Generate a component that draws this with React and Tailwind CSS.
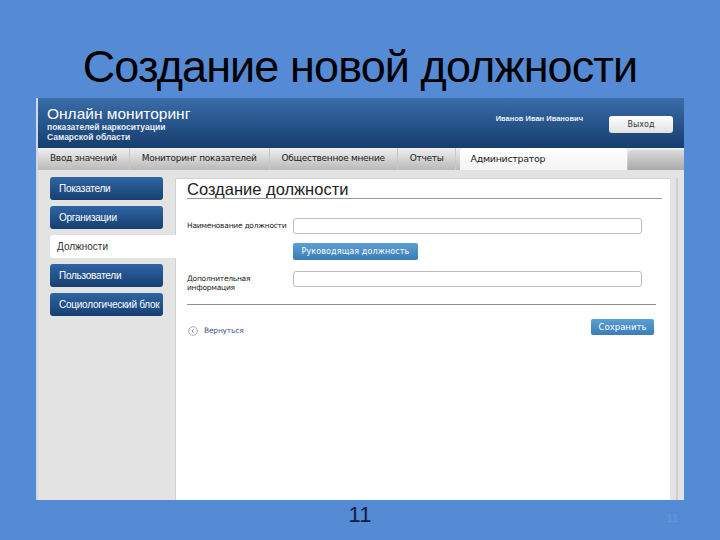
const sideItems = ['Показатели', 'Организации', 'Должности', 'Пользователи', 'Социологический блок']

const navItems = ['Ввод значений', 'Мониторинг показателей', 'Общественное мнение', 'Отчеты']

const App = () => {
    return (
        <div className="w-[720px] h-[540px] bg-[#558ad5] flex flex-col items-center overflow-hidden font-['Liberation_Sans',sans-serif]">
            <h1 className="mt-[38px] h-[60px] text-[45px] leading-[58px] text-black tracking-[-0.9px]">Создание новой должности</h1>

            <div className="w-[648px] h-[402px] flex flex-col border-l-2 border-[#cfd8e4] bg-[#e3e3e3]">
                {/* header */}
                <div className="h-[50px] bg-gradient-to-b from-[#3a6da9] to-[#163e6e] flex justify-between">
                    <div className="pl-[9px] pt-[6px] text-white">
                        <p className="text-[15.5px] leading-[19px]">Онлайн мониторинг</p>
                        <p className="text-[8.5px] leading-[9.5px] font-bold text-[#e6edf6]">показателей наркоситуации</p>
                        <p className="text-[8.5px] leading-[9.5px] font-bold text-[#e6edf6]">Самарской области</p>
                    </div>
                    <div className="flex items-start pt-[18px] pr-[11px]">
                        <p className="text-[7.5px] font-bold text-[#e8eef6] -mt-[3px] mr-[26px]">Иванов Иван Иванович</p>
                        <button className="w-[64px] h-[17px] rounded-[3px] bg-gradient-to-b from-white to-[#e2e2e2] text-[8px] text-[#333] font-['DejaVu_Sans',sans-serif]">Выход</button>
                    </div>
                </div>

                {/* nav */}
                <div className="h-[22px] bg-gradient-to-b from-[#f0f0f0] to-[#b9b9b9] flex items-stretch text-[9px] text-[#222] font-['DejaVu_Sans',sans-serif] tracking-[-0.3px]">
                    {navItems.map((item) => (
                        <div key={item} className="flex items-center px-[12px] border-r border-[#c9c9c9]">
                            {item}
                        </div>
                    ))}
                    <div className="w-[167px] ml-[4px] bg-gradient-to-b from-white to-[#f4f4f4] rounded-t-[4px] flex items-center pl-[10px] text-[9.5px]">Администратор</div>
                    <div className="flex-1 mt-[2px] ml-[1px] rounded-tl-[5px] bg-gradient-to-b from-[#dcdcdc] to-[#a9a9a9]"></div>
                </div>

                {/* body */}
                <div className="flex-1 flex">
                    <div className="w-[137px] pt-[7px] pl-[12px] flex flex-col gap-[6px]">
                        {sideItems.map((item) =>
                            item === 'Должности' ? (
                                <div key={item} className="h-[23px] -mr-[6px] bg-white rounded-l-[3px] flex items-center pl-[7px] text-[10px] text-[#333] relative z-10">
                                    {item}
                                </div>
                            ) : (
                                <div key={item} className="w-[113px] h-[23px] rounded-[3px] bg-gradient-to-b from-[#2f66a4] to-[#173f71] flex items-center pl-[9px] text-[10px] tracking-[-0.25px] text-white whitespace-nowrap overflow-hidden">
                                    {item}
                                </div>
                            )
                        )}
                    </div>

                    <div className="w-[495px] mt-[8px] bg-white border-l border-t border-[#d2d2d2] pl-[11px] pt-[1px]">
                        <div className="w-[475px] border-b border-[#9a9a9a] h-[19px]">
                            <p className="text-[16.5px] leading-[19px] text-[#222]">Создание должности</p>
                        </div>

                        <div className="flex items-center mt-[19px] h-[16px]">
                            <p className="w-[106px] shrink-0 whitespace-nowrap text-[7.5px] text-[#222] font-['DejaVu_Sans',sans-serif] tracking-[-0.25px]">Наименование должности</p>
                            <div className="w-[349px] h-[16px] rounded-[3px] border border-[#bcbcbc]"></div>
                        </div>

                        <div className="flex mt-[9px] pl-[106px]">
                            <button className="w-[125px] h-[17px] rounded-[2px] bg-gradient-to-b from-[#5b9fd3] to-[#3a7db7] text-white text-[8px] font-['DejaVu_Sans',sans-serif] tracking-[0.1px]">Руководящая должность</button>
                        </div>

                        <div className="flex items-start mt-[11px]">
                            <p className="w-[106px] shrink-0 text-[7.5px] leading-[9px] pt-[3px] text-[#222] font-['DejaVu_Sans',sans-serif] tracking-[-0.25px]">Дополнительная<br />информация</p>
                            <div className="w-[349px] h-[16px] rounded-[3px] border border-[#bcbcbc]"></div>
                        </div>

                        <div className="w-[469px] border-b border-[#8e8e8e] mt-[12px]"></div>

                        <div className="flex justify-between items-center w-[467px] mt-[13px]">
                            <div className="flex items-center gap-[6px] mt-[7px] pl-[1px]">
                                <svg width="10" height="10" viewBox="0 0 10 10">
                                    <circle cx="5" cy="5" r="4.3" fill="none" stroke="#9aa4b4" strokeWidth="0.9" />
                                    <path d="M5.8 3.2 L3.9 5 L5.8 6.8" fill="none" stroke="#6d7a92" strokeWidth="0.9" />
                                </svg>
                                <span className="text-[7.5px] text-[#3f5590] font-['DejaVu_Sans',sans-serif] tracking-[-0.2px]">Вернуться</span>
                            </div>
                            <button className="w-[63px] h-[16px] rounded-[2px] bg-gradient-to-b from-[#5b9fd3] to-[#3a7db7] text-white text-[8.5px] font-['DejaVu_Sans',sans-serif]">Сохранить</button>
                        </div>
                    </div>

                    <div className="flex-1 flex justify-center pt-[8px]">
                        <div className="w-[2px] h-full bg-[#cfcfcf]"></div>
                    </div>
                </div>
            </div>

            <div className="w-full h-[40px] flex items-center justify-center relative">
                <span className="text-[22px] text-[#0f1e3c] -mt-[11px]">11</span>
                <span className="absolute right-[42px] top-[10px] text-[11px] text-[#6b98d9]">11</span>
            </div>
        </div>
    )
}

export default App
